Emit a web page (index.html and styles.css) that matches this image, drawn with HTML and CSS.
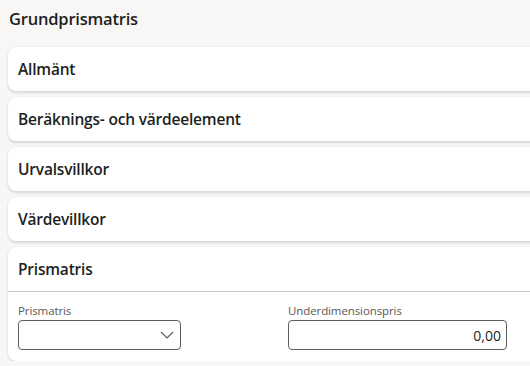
FILE: index.html
```
<!DOCTYPE html>
<html lang="sv">
  <head>
    <meta charset="UTF-8" />
    <meta name="viewport" content="width=device-width, initial-scale=1.0" />
    <link rel="stylesheet" href="styles.css">
    <title>Grundprismatris</title>
  </head>
  <body>
    <h1 class="page-title">Grundprismatris</h1>

    <div class="section-list">
      <div class="section">
        <h2 class="section-header">Allmänt</h2>
      </div>
      <div class="section">
        <h2 class="section-header">Beräknings- och värdeelement</h2>
      </div>
      <div class="section">
        <h2 class="section-header">Urvalsvillkor</h2>
      </div>
      <div class="section">
        <h2 class="section-header">Värdevillkor</h2>
      </div>
      <div class="section section--open">
        <h2 class="section-header">Prismatris</h2>
        <div class="section-body">
          <div class="field field--select">
            <label class="label" for="prismatris">Prismatris</label>
            <div class="select">
              <input id="prismatris" type="text" class="input" />
              <svg class="chevron" width="14" height="8" viewBox="0 0 14 8">
                <path d="M1 1 L7 7 L13 1" fill="none" stroke="#605e5c" stroke-width="1.2" />
              </svg>
            </div>
          </div>
          <div class="field field--number">
            <label class="label" for="underdim">Underdimensionspris</label>
            <input id="underdim" type="text" class="input input--number" value="0,00" />
          </div>
        </div>
      </div>
    </div>
  </body>
</html>
```

FILE: styles.css
```
html,
body {
  margin: 0;
  padding: 0;
}

body {
  width: 560px;
  background-color: #f8f7f6;
  color: #201f1e;
  font-family: "Open Sans", "Noto Sans", sans-serif;
  overflow: hidden;
}

h1,
h2 {
  margin: 0;
  padding: 0;
}

.page-title {
  height: 47px;
  padding: 7px 9px 0;
  box-sizing: border-box;
  font-size: 16.5px;
  font-weight: 600;
  letter-spacing: -0.2px;
}

.section-list {
  display: flex;
  flex-direction: column;
  gap: 6px;
  padding-left: 8px;
}

.section {
  background-color: #fff;
  border-radius: 8px;
  box-shadow: 0 1.5px 3px rgba(0, 0, 0, 0.13), 0 0 1px rgba(0, 0, 0, 0.08);
}

.section-header {
  display: flex;
  align-items: center;
  height: 44px;
  padding-left: 10px;
  font-size: 15.5px;
  font-weight: 600;
  letter-spacing: -0.2px;
}

.section--open .section-header {
  border-bottom: 1px solid #c8c6c4;
}

.section-body {
  display: flex;
  gap: 107px;
  padding: 11px 10px 11px;
}

.field {
  display: flex;
  flex-direction: column;
}

.label {
  height: 16px;
  margin-bottom: 1px;
  font-size: 11.5px;
  color: #5a5856;
  letter-spacing: -0.1px;
}

.select {
  position: relative;
  width: 163px;
}

.input {
  box-sizing: border-box;
  width: 163px;
  height: 30px;
  padding: 0 5px 0 8px;
  border: 1px solid #605e5c;
  border-radius: 4px;
  background: #fff;
  font-family: inherit;
  font-size: 14px;
  color: #201f1e;
}

.chevron {
  position: absolute;
  right: 7px;
  top: 11px;
}

.input--number {
  width: 219px;
  text-align: right;
}
```
